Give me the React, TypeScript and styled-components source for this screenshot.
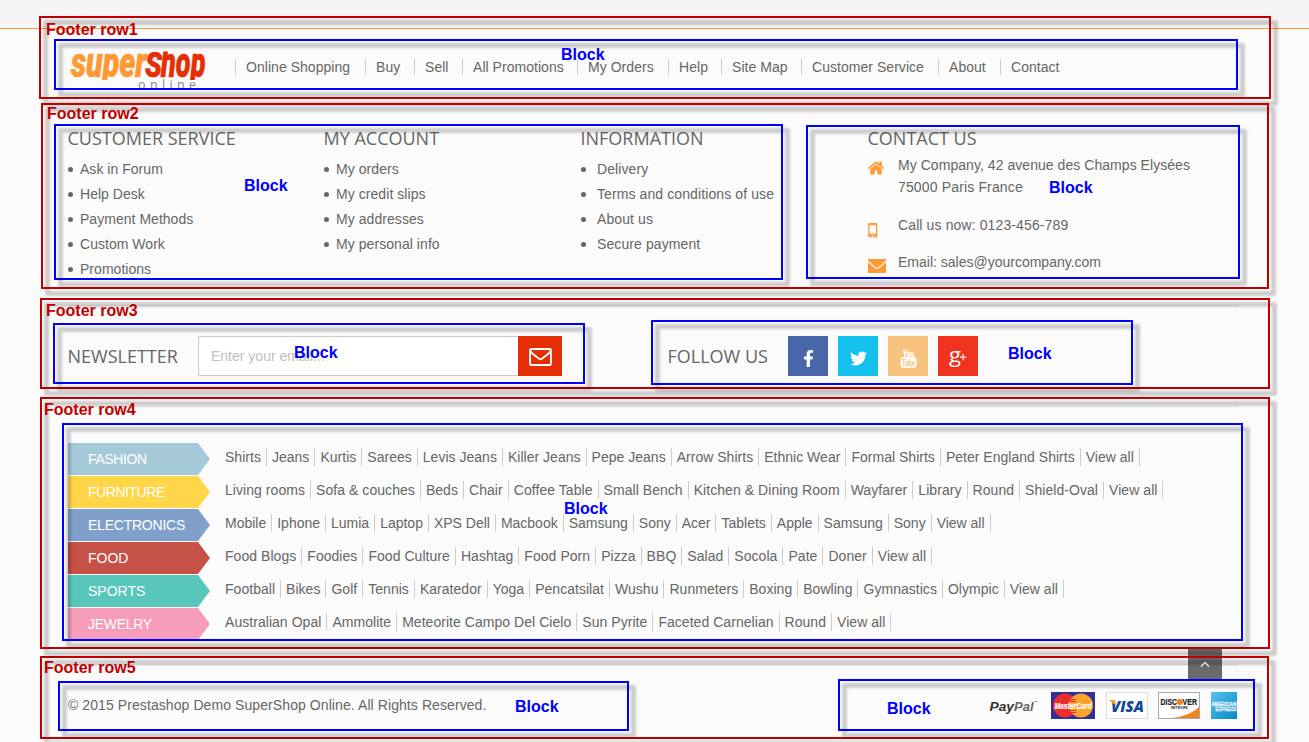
import React from 'react';
import styled, { createGlobalStyle } from 'styled-components';
import { FaFacebookF, FaTwitter } from 'react-icons/fa';

const GlobalStyle = createGlobalStyle`
  *, *::before, *::after { box-sizing: border-box; }
  body { margin: 0; background: #fbfbfb; }
  ul, h4, p { margin: 0; padding: 0; }
  ul { list-style: none; }
`;

const Page = styled.div`
  position: relative;
  width: 1309px;
  height: 742px;
  overflow: hidden;
  background: #fbfbfb;
  color: #666;
  font: 14px/16px 'Liberation Sans', Arial, sans-serif;
`;

const TopStrip = styled.div`
  height: 29px;
  background: #f5f5f5;
  border-bottom: 1px solid #ff9933;
`;

const Container = styled.footer`
  width: 1170px;
  margin-left: 68px;
`;

const Heading = styled.h4`
  font: 400 18px/24px 'Open Sans', sans-serif;
  text-transform: uppercase;
  text-indent: -0.5px;
  white-space: nowrap;
`;

const Tracked = styled.span<{ $ls: number }>`
  letter-spacing: ${(p) => p.$ls}px;
`;

/* Row 1 */
const NavRow = styled.div`
  display: flex;
  align-items: flex-start;
  height: 97px;
`;

const Logo = styled.svg`
  width: 140px;
  height: 44px;
  margin-top: 19px;
  flex: none;
`;

const Nav = styled.ul`
  display: flex;
  margin: 30px 0 0 27px;
`;

const NavItem = styled.li<{ $w: number }>`
  width: ${(p) => p.$w}px;
  height: 16px;
  padding-left: 10px;
  border-left: 1px solid #ccc;
  letter-spacing: 0.04px;
  white-space: nowrap;
`;

/* Row 2 */
const LinksRow = styled.div`
  display: grid;
  grid-template-columns: 256px 257px 287px 1fr;
  height: 179px;
`;

const LinkList = styled.ul`
  margin-top: 7px;
`;

const LinkItem = styled.li<{ $gap: number; $ls: number }>`
  display: flex;
  align-items: center;
  gap: ${(p) => p.$gap}px;
  line-height: 25px;
  letter-spacing: ${(p) => p.$ls}px;
  white-space: nowrap;

  &::before {
    content: '';
    width: 5px;
    height: 5px;
    border-radius: 50%;
    background: #666;
  }
`;

const ContactList = styled.ul`
  margin-top: 4px;
`;

const ContactItem = styled.li<{ $h: number }>`
  display: grid;
  grid-template-columns: 30px 1fr;
  height: ${(p) => p.$h}px;
  line-height: 22px;
  white-space: nowrap;

  svg { fill: #ff9933; display: block; }
`;

const IconSlot = styled.span<{ $top: number; $left?: number }>`
  margin-left: ${(p) => p.$left ?? 0}px;
  padding-top: ${(p) => p.$top}px;
`;

/* Row 3 */
const SocialRow = styled.div`
  display: flex;
  height: 101px;
  padding-top: 30px;
  border-top: 1px solid #e8e8e8;
`;

const Newsletter = styled.form`
  display: flex;
  align-items: center;
  width: 600px;
  height: 40px;
`;

const SectionTitle = styled(Heading)<{ $w: number }>`
  width: ${(p) => p.$w}px;
`;

const EmailInput = styled.input`
  width: 320px;
  height: 40px;
  padding: 0 12px;
  border: 1px solid #ccc;
  border-right: 0;
  border-radius: 0;
  background: #fff;
  font: 14px 'Liberation Sans', Arial, sans-serif;
  &::placeholder { color: #c0c0c0; opacity: 1; }
`;

const Submit = styled.button`
  display: flex;
  align-items: center;
  justify-content: center;
  width: 44px;
  height: 40px;
  padding: 2px 0 0;
  border: 0;
  background: #e62e04;
`;

const Follow = styled.div`
  display: flex;
  align-items: center;
  height: 40px;
`;

const SocialLinks = styled.div`
  display: flex;
  gap: 10px;
`;

const SocialLink = styled.a<{ $bg: string }>`
  display: flex;
  align-items: center;
  justify-content: center;
  width: 40px;
  height: 40px;
  padding-top: 4px;
  background: ${(p) => p.$bg};
  color: #fff;
`;

/* Row 4 */
const CategoryRow = styled.div`
  display: flex;
  flex-direction: column;
  gap: 1px;
  height: 258px;
  padding-top: 36px;
  border-top: 1px solid #e8e8e8;
`;

const Category = styled.div`
  display: flex;
  height: 32px;
`;

const CategoryLabel = styled.div<{ $bg: string; $ls: number }>`
  width: 142px;
  padding-left: 20px;
  line-height: 32px;
  letter-spacing: ${(p) => p.$ls}px;
  color: #fff;
  background: ${(p) => p.$bg};
  clip-path: polygon(0 0, 130px 0, 100% 50%, 130px 100%, 0 100%);
`;

const Tags = styled.ul<{ $ls: number }>`
  display: flex;
  margin: 5px 0 0 15px;
  letter-spacing: ${(p) => p.$ls}px;
`;

const Tag = styled.li`
  height: 18px;
  margin-right: 5px;
  padding-right: 5px;
  border-right: 1px solid #ccc;
  line-height: 18px;
  white-space: nowrap;
`;

/* Row 5 */
const BottomRow = styled.div`
  display: flex;
  justify-content: space-between;
  border-top: 1px solid #e8e8e8;
`;

const Copyright = styled.p`
  margin-top: 32px;
  letter-spacing: 0.082px;
`;

const Payments = styled.div`
  display: flex;
  margin: 27px 0 0;

  svg { display: block; }
`;

const ScrollTop = styled.button`
  position: absolute;
  left: 1188px;
  top: 649px;
  display: flex;
  justify-content: center;
  width: 34px;
  height: 31px;
  padding: 12px 0 0;
  border: 0;
  background: #6a6a6a;
`;

/* Annotations laid over the footer */
const Frame = styled.div<{ $x: number; $y: number; $r: number; $b: number; $c: string }>`
  position: absolute;
  left: ${(p) => p.$x}px;
  top: ${(p) => p.$y}px;
  width: ${(p) => p.$r - p.$x}px;
  height: ${(p) => p.$b - p.$y}px;
  pointer-events: none;

  &::before {
    content: '';
    position: absolute;
    inset: 3.5px -6.5px -6.5px 3.5px;
    border: 5px solid rgba(0, 0, 0, 0.18);
    border-radius: 2px;
    filter: blur(1.2px);
  }

  &::after {
    content: '';
    position: absolute;
    inset: 0;
    border: 2px solid ${(p) => p.$c};
  }
`;

const Note = styled.span<{ $x: number; $base: number; $c: string }>`
  position: absolute;
  left: ${(p) => p.$x}px;
  top: ${(p) => p.$base - 14}px;
  color: ${(p) => p.$c};
  font: 700 16px/18px 'Liberation Sans', Arial, sans-serif;
  white-space: nowrap;
`;

const RED = '#c00000';
const BLUE = '#0000ff';

const navItems: [string, number][] = [
  ['Online Shopping', 130],
  ['Buy', 49],
  ['Sell', 48],
  ['All Promotions', 115],
  ['My Orders', 91],
  ['Help', 53],
  ['Site Map', 80],
  ['Customer Service', 137],
  ['About', 62],
  ['Contact', 80],
];

const linkColumns = [
  { title: 'Customer Service', gap: 7, ls: 0.03, links: ['Ask in Forum', 'Help Desk', 'Payment Methods', 'Custom Work', 'Promotions'] },
  { title: 'My Account', gap: 7, ls: 0.06, links: ['My orders', 'My credit slips', 'My addresses', 'My personal info'] },
  { title: 'Information', gap: 11, ls: 0.1, links: ['Delivery', 'Terms and conditions of use', 'About us', 'Secure payment'] },
];

const categories = [
  { name: 'FASHION', bg: '#a6c9d9', nameLs: -0.4, ls: 0.02, tags: 'Shirts|Jeans|Kurtis|Sarees|Levis Jeans|Killer Jeans|Pepe Jeans|Arrow Shirts|Ethnic Wear|Formal Shirts|Peter England Shirts|View all' },
  { name: 'FURNITURE', bg: '#ffd549', nameLs: -0.45, ls: 0.055, tags: 'Living rooms|Sofa & couches|Beds|Chair|Coffee Table|Small Bench|Kitchen & Dining Room|Wayfarer|Library|Round|Shield-Oval|View all' },
  { name: 'ELECTRONICS', bg: '#809fca', nameLs: -0.23, ls: -0.005, tags: 'Mobile|Iphone|Lumia|Laptop|XPS Dell|Macbook|Samsung|Sony|Acer|Tablets|Apple|Samsung|Sony|View all' },
  { name: 'FOOD', bg: '#c55147', nameLs: 0, ls: 0.045, tags: 'Food Blogs|Foodies|Food Culture|Hashtag|Food Porn|Pizza|BBQ|Salad|Socola|Pate|Doner|View all' },
  { name: 'SPORTS', bg: '#59c6bc', nameLs: 0, ls: 0.03, tags: 'Football|Bikes|Golf|Tennis|Karatedor|Yoga|Pencatsilat|Wushu|Runmeters|Boxing|Bowling|Gymnastics|Olympic|View all' },
  { name: 'JEWELRY', bg: '#f59db9', nameLs: -0.3, ls: 0.045, tags: 'Australian Opal|Ammolite|Meteorite Campo Del Cielo|Sun Pyrite|Faceted Carnelian|Round|View all' },
];

const frames: [string, number, number, number, number][] = [
  [RED, 39, 16, 1271, 99],
  [RED, 41, 103, 1269, 289],
  [RED, 40, 298, 1270, 389],
  [RED, 40, 397, 1270, 649],
  [RED, 40, 656, 1269, 739],
  [BLUE, 54, 39, 1238, 90],
  [BLUE, 54, 124, 783, 280],
  [BLUE, 806, 125, 1240, 279],
  [BLUE, 53, 323, 585, 384],
  [BLUE, 651, 320, 1133, 385],
  [BLUE, 62, 423, 1243, 641],
  [BLUE, 58, 681, 629, 731],
  [BLUE, 838, 679, 1255, 731],
];

const notes: [string, string, number, number][] = [
  ['Footer row1', RED, 46, 35],
  ['Footer row2', RED, 47, 119],
  ['Footer row3', RED, 46, 316],
  ['Footer row4', RED, 44, 415],
  ['Footer row5', RED, 44, 673],
  ['Block', BLUE, 561, 60],
  ['Block', BLUE, 244, 191],
  ['Block', BLUE, 1049, 193],
  ['Block', BLUE, 294, 358],
  ['Block', BLUE, 1008, 359],
  ['Block', BLUE, 564, 514],
  ['Block', BLUE, 515, 712],
  ['Block', BLUE, 887, 714],
];

const SuperShopLogo = () => (
  <Logo viewBox="0 0 140 44" aria-label="SuperShop Online">
    <defs>
      <clipPath id="wordmark"><rect x="0" y="3.5" width="140" height="28.5" /></clipPath>
      <clipPath id="tagline"><rect x="0" y="31" width="140" height="9.5" /></clipPath>
    </defs>
    <g clipPath="url(#wordmark)" fontFamily="Roboto, sans-serif" fontWeight="900" fontStyle="italic" strokeWidth="0.6">
      <text x="3" y="29.300" fontSize="42" fill="#ff9933" stroke="#ff9933" textLength="75.500" lengthAdjust="spacingAndGlyphs">super</text>
      <text x="77" y="29.300" fontSize="35.500" fill="#e62e04" stroke="#e62e04" textLength="17" lengthAdjust="spacingAndGlyphs">S</text>
      <text x="93" y="29.300" fontSize="42" fill="#e62e04" stroke="#e62e04" textLength="44.500" lengthAdjust="spacingAndGlyphs">hop</text>
    </g>
    <text clipPath="url(#tagline)" x="70" y="41" fontFamily="Open Sans, sans-serif" fontSize="12.500" fill="#888" textLength="58" lengthAdjust="spacing">online</text>
  </Logo>
);

const HomeIcon = () => (
  <svg width="18" height="18" viewBox="0 0 1792 1792">
    <path d="M1472 992v480q0 26-19 45t-45 19h-384v-384h-256v384H384q-26 0-45-19t-19-45V992q0-1 .5-3t.5-3l575-474 575 474q1 2 1 6zm223-69l-62 74q-8 9-21 11h-3q-13 0-21-7L896 424l-692 577q-12 8-24 7-13-2-21-11l-62-74q-8-10-7-23.500t11-21.500l719-599q32-26 76-26t76 26l244 204V288q0-14 9-23t23-9h192q14 0 23 9t9 23v408l219 182q10 8 11 21.500t-7 23.500z" />
  </svg>
);

const PhoneIcon = () => (
  <svg width="10" height="15" viewBox="0 0 10 15">
    <path fillRule="evenodd" d="M1.500 0h6.500A1.300 1.300 0 0 1 9.300 1.300v11.700A1.300 1.300 0 0 1 8 14.300h-6.500A1.300 1.300 0 0 1 .2 13v-11.700A1.300 1.300 0 0 1 1.500 0zM1.500 2.300v8.500h6.500V2.300zM3.500 12.200v1h2.500v-1z" />
  </svg>
);

const MailIcon = () => (
  <svg width="18" height="14" viewBox="0 0 18 14">
    <path d="M0 0h18v1.600L10.500 8.200q-1.500 1.200-3 0L0 1.600z" />
    <path d="M0 3.200l6.800 6q2.200 1.600 4.400 0L18 3.200V14H0z" />
  </svg>
);

const MailOutlineIcon = () => (
  <svg width="23" height="18" viewBox="0 0 23 18" fill="none" stroke="#fff" strokeWidth="1.900" strokeLinejoin="round">
    <rect x="1.100" y="1" width="20.800" height="16" rx="1.300" />
    <path d="M1.300 2.500Q2 4.500 4 6l5.300 4.300q2.200 1.700 4.400 0L19 6q2-1.500 2.700-3.500" />
  </svg>
);

const YouTubeIcon = () => (
  <svg width="17" height="19" viewBox="0 0 17 19">
    <g fontFamily="Roboto, sans-serif" fontWeight="700">
      <text x="3" y="7.500" fontSize="9.500" fill="#fff" stroke="#fff" strokeWidth=".3" textLength="11" lengthAdjust="spacingAndGlyphs">You</text>
      <rect x="0.500" y="8.300" width="16" height="10.500" rx="2.500" fill="#fff" />
      <text x="2" y="16.800" fontSize="9" fill="#f6c27d" textLength="13" lengthAdjust="spacingAndGlyphs">Tube</text>
    </g>
  </svg>
);

const GooglePlusIcon = () => (
  <svg width="18" height="19" viewBox="0 0 18 19" fill="#fff">
    <text x="0" y="12.500" fontFamily="Open Sans, sans-serif" fontSize="20" textLength="12" lengthAdjust="spacingAndGlyphs">g</text>
    <path d="M13.500 5h1.200v2.500h2.500v1.200h-2.500v2.500h-1.200V8.700H11V7.500h2.500z" />
  </svg>
);

const PayPal = () => (
  <svg width="62" height="28" viewBox="0 0 62 28" fontFamily="Liberation Sans, Arial, sans-serif" fontWeight="700" fontStyle="italic" fontSize="13">
    <text x="0.500" y="18.500" fill="#333" textLength="24.500" lengthAdjust="spacingAndGlyphs">Pay</text>
    <text x="25" y="18.500" fill="#666" textLength="19.500" lengthAdjust="spacingAndGlyphs">Pal</text>
    <path d="M45.500 9.500h3" stroke="#999" />
  </svg>
);

const MasterCard = () => (
  <svg width="55" height="28" viewBox="0 0 55 28">
    <rect width="44" height="27" fill="#30309a" />
    <circle cx="14" cy="13.500" r="12" fill="#ed2c2c" />
    <circle cx="30" cy="13.500" r="12" fill="#fca32c" />
    <path d="M19.500 7.500h5M19 9.500h6M19 18.500h6M20 20.500h5" stroke="#ed2c2c" />
    <text x="3.500" y="17" fill="#fff" stroke="#fff" strokeWidth=".2" fontFamily="Liberation Sans, Arial, sans-serif" fontWeight="700" fontStyle="italic" fontSize="8.500" textLength="37" lengthAdjust="spacingAndGlyphs">MasterCard</text>
  </svg>
);

const Visa = () => (
  <svg width="52" height="28" viewBox="0 0 52 28">
    <rect x=".5" y=".5" width="41" height="26" fill="#fff" stroke="#ddd" />
    <text x="5" y="19.500" fill="#12489b" fontFamily="Open Sans, sans-serif" fontWeight="800" fontStyle="italic" fontSize="16" textLength="33" lengthAdjust="spacingAndGlyphs">VISA</text>
    <path d="M2.500 8h6l1.700 5.500z" fill="#f8a21c" />
  </svg>
);

const Discover = () => (
  <svg width="53" height="28" viewBox="0 0 53 28">
    <rect x=".5" y=".5" width="41" height="26" fill="#fff" stroke="#aaa" />
    <path d="M41 15v11H14Q32 24 41 15z" fill="#f58220" />
    <g fill="#222" fontFamily="Liberation Sans, Arial, sans-serif" fontWeight="700">
      <text x="2.500" y="13" fontSize="8.500" stroke="#222" strokeWidth=".2" textLength="16.500" lengthAdjust="spacingAndGlyphs">DISC</text>
      <text x="24.500" y="13" fontSize="8.500" stroke="#222" strokeWidth=".2" textLength="14.500" lengthAdjust="spacingAndGlyphs">VER</text>
      <text x="13" y="17" fontSize="3.500" textLength="17" lengthAdjust="spacingAndGlyphs">NETWORK</text>
    </g>
    <circle cx="21.800" cy="10" r="3" fill="#f58220" />
  </svg>
);

const Amex = () => (
  <svg width="27" height="28" viewBox="0 0 27 28">
    <defs>
      <linearGradient id="amex" x1="0" y1="0" x2="1" y2="1">
        <stop offset="0" stopColor="#58c3ee" />
        <stop offset="1" stopColor="#0784c8" />
      </linearGradient>
    </defs>
    <rect width="26" height="27" fill="url(#amex)" />
    <g fill="none" stroke="#fff" strokeWidth=".45" fontFamily="Liberation Sans, Arial, sans-serif" fontWeight="700" fontSize="5.500">
      <text x=".5" y="13.500" textLength="25" lengthAdjust="spacingAndGlyphs">AMERICAN</text>
      <text x="4.500" y="19" textLength="21" lengthAdjust="spacingAndGlyphs">EXPRESS</text>
    </g>
  </svg>
);

export default function App() {
  return (
    <Page>
      <GlobalStyle />
      <TopStrip />
      <Container>
        <NavRow>
          <SuperShopLogo />
          <Nav>
            {navItems.map(([label, w]) => (
              <NavItem key={label} $w={w}>{label}</NavItem>
            ))}
          </Nav>
        </NavRow>

        <LinksRow>
          {linkColumns.map((col) => (
            <div key={col.title}>
              <Heading>{col.title}</Heading>
              <LinkList>
                {col.links.map((l) => (
                  <LinkItem key={l} $gap={col.gap} $ls={col.ls}>{l}</LinkItem>
                ))}
              </LinkList>
            </div>
          ))}
          <div>
            <Heading>Contact Us</Heading>
            <ContactList>
              <ContactItem $h={60}>
                <IconSlot $top={5} $left={-1}><HomeIcon /></IconSlot>
                <span>
                  <Tracked $ls={0.05}>My Company, 42 avenue des Champs Elysées</Tracked>
                  <br />
                  <Tracked $ls={0.15}>75000 Paris France</Tracked>
                </span>
              </ContactItem>
              <ContactItem $h={37}>
                <IconSlot $top={8.5}><PhoneIcon /></IconSlot>
                <Tracked $ls={0.12}>Call us now: 0123-456-789</Tracked>
              </ContactItem>
              <ContactItem $h={22}>
                <IconSlot $top={8}><MailIcon /></IconSlot>
                <span>Email: sales@yourcompany.com</span>
              </ContactItem>
            </ContactList>
          </div>
        </LinksRow>

        <SocialRow>
          <Newsletter>
            <SectionTitle $w={130}>Newsletter</SectionTitle>
            <EmailInput placeholder="Enter your email..." />
            <Submit type="button" aria-label="Subscribe"><MailOutlineIcon /></Submit>
          </Newsletter>
          <Follow>
            <SectionTitle $w={120}>Follow us</SectionTitle>
            <SocialLinks>
              <SocialLink $bg="#4867aa"><FaFacebookF size={17} /></SocialLink>
              <SocialLink $bg="#14c1ec"><FaTwitter size={17} /></SocialLink>
              <SocialLink $bg="#f6c27d"><YouTubeIcon /></SocialLink>
              <SocialLink $bg="#ef331f"><GooglePlusIcon /></SocialLink>
            </SocialLinks>
          </Follow>
        </SocialRow>

        <CategoryRow>
          {categories.map((c) => (
            <Category key={c.name}>
              <CategoryLabel $bg={c.bg} $ls={c.nameLs}>{c.name}</CategoryLabel>
              <Tags $ls={c.ls}>
                {c.tags.split('|').map((t, i) => (
                  <Tag key={i}>{t}</Tag>
                ))}
              </Tags>
            </Category>
          ))}
        </CategoryRow>

        <BottomRow>
          <Copyright>© 2015 Prestashop Demo SuperShop Online. All Rights Reserved.</Copyright>
          <Payments>
            <PayPal />
            <MasterCard />
            <Visa />
            <Discover />
            <Amex />
          </Payments>
        </BottomRow>
      </Container>

      <ScrollTop aria-label="Back to top">
        <svg width="10" height="7" viewBox="0 0 10 7" fill="none" stroke="#fff" strokeWidth="1.500">
          <path d="M1 5.500l4-4 4 4" />
        </svg>
      </ScrollTop>

      {frames.map(([c, x, y, r, b]) => (
        <Frame key={`${x}-${y}`} $c={c} $x={x} $y={y} $r={r} $b={b} />
      ))}
      {notes.map(([label, c, x, base]) => (
        <Note key={`${x}-${base}`} $c={c} $x={x} $base={base}>{label}</Note>
      ))}
    </Page>
  );
}
